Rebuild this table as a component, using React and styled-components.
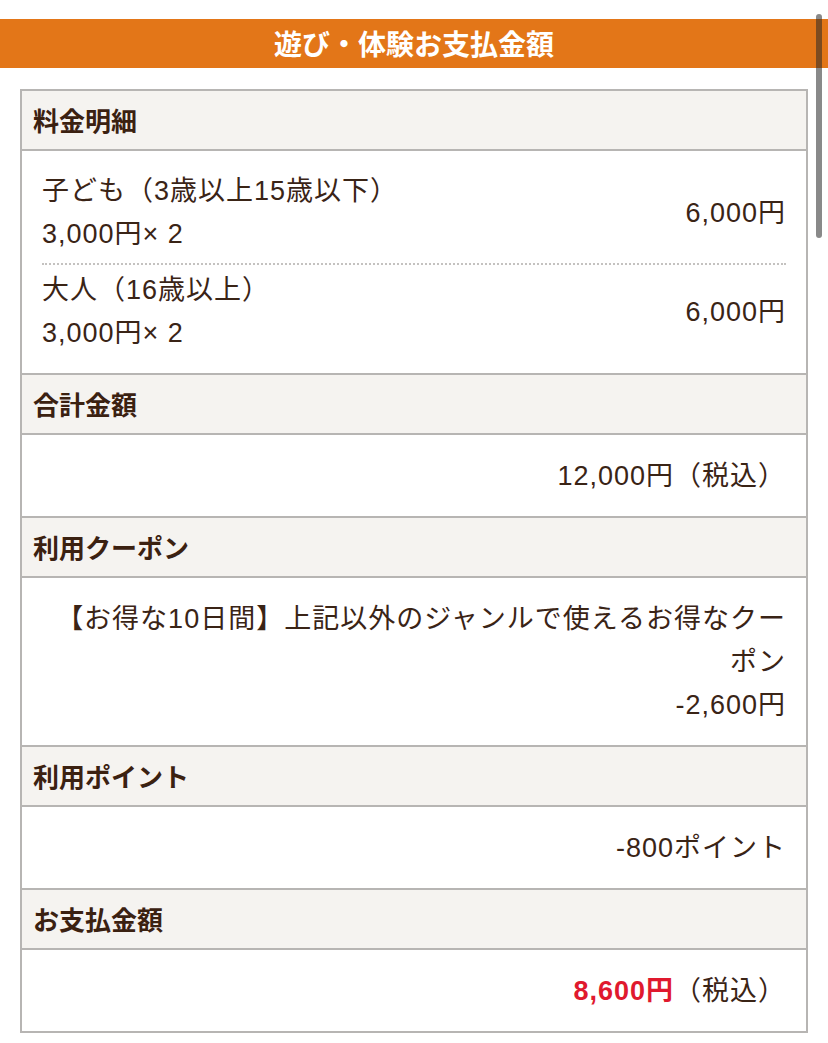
import React from "react";
import styled, { createGlobalStyle } from "styled-components";

const Global = createGlobalStyle`
  html, body { margin: 0; padding: 0; background: #fff; }
  body {
    font-family: "Liberation Sans", "Noto Sans CJK JP", sans-serif;
    color: #3a2416;
    -webkit-font-smoothing: antialiased;
  }
`;

const Page = styled.div`
  padding-top: 19px;
  padding-bottom: 8px;
`;

const TitleBar = styled.h2`
  margin: 0;
  height: 49px;
  line-height: 49px;
  background: #e37618;
  color: #fff;
  font-family: "Noto Sans CJK JP", sans-serif;
  font-size: 28px;
  font-weight: 700;
  text-align: center;
`;

const Table = styled.div`
  margin: 21px 20px 0;
  border: 2px solid #b7b5b3;
  border-bottom: none;
`;

const SectionHead = styled.div`
  background: #f5f3f0;
  border-bottom: 2px solid #b7b5b3;
  padding: 9px 11px;
  height: 40px;
  line-height: 40px;
  font-family: "Noto Sans CJK JP", sans-serif;
  font-size: 26px;
  font-weight: 700;
  color: #3b2111;
`;

const SectionBody = styled.div`
  border-bottom: 2px solid #b7b5b3;
  padding: ${(p) => (p.$items ? "19px 20px 18px 20px" : "20px 20px 18px 20px")};
  font-size: 27px;
  line-height: 43px;
  letter-spacing: 1px;
  text-align: right;
  color: #3a2416;
`;

const Item = styled.div`
  display: flex;
  align-items: center;
  justify-content: space-between;
  text-align: left;
  & + & {
    margin-top: 7px;
    padding-top: 4px;
    border-top: 2px dotted #c4c2c0;
  }
`;

const ItemLabel = styled.div`
  display: flex;
  flex-direction: column;
`;

const Amount = styled.div`
  text-align: right;
`;

const Red = styled.span`
  color: #e0192e;
  font-weight: 700;
`;

const ScrollThumb = styled.div`
  position: fixed;
  top: 14px;
  left: 816px;
  width: 6px;
  height: 224px;
  border-radius: 3px;
  background: rgba(40, 40, 40, 0.55);
`;

const items = [
  { label: "子ども（3歳以上15歳以下）", unit: "3,000円× 2", amount: "6,000円" },
  { label: "大人（16歳以上）", unit: "3,000円× 2", amount: "6,000円" },
];

export default function App() {
  return (
    <>
      <Global />
      <Page>
        <TitleBar>遊び・体験お支払金額</TitleBar>
        <Table>
          <SectionHead>料金明細</SectionHead>
          <SectionBody $items>
            {items.map((it) => (
              <Item key={it.label}>
                <ItemLabel>
                  <span>{it.label}</span>
                  <span>{it.unit}</span>
                </ItemLabel>
                <Amount>{it.amount}</Amount>
              </Item>
            ))}
          </SectionBody>
          <SectionHead>合計金額</SectionHead>
          <SectionBody>12,000円（税込）</SectionBody>
          <SectionHead>利用クーポン</SectionHead>
          <SectionBody>
            <div>【お得な10日間】上記以外のジャンルで使えるお得なクーポン</div>
            <div>-2,600円</div>
          </SectionBody>
          <SectionHead>利用ポイント</SectionHead>
          <SectionBody>-800ポイント</SectionBody>
          <SectionHead>お支払金額</SectionHead>
          <SectionBody>
            <Red>8,600円</Red>（税込）
          </SectionBody>
        </Table>
      </Page>
      <ScrollThumb />
    </>
  );
}
